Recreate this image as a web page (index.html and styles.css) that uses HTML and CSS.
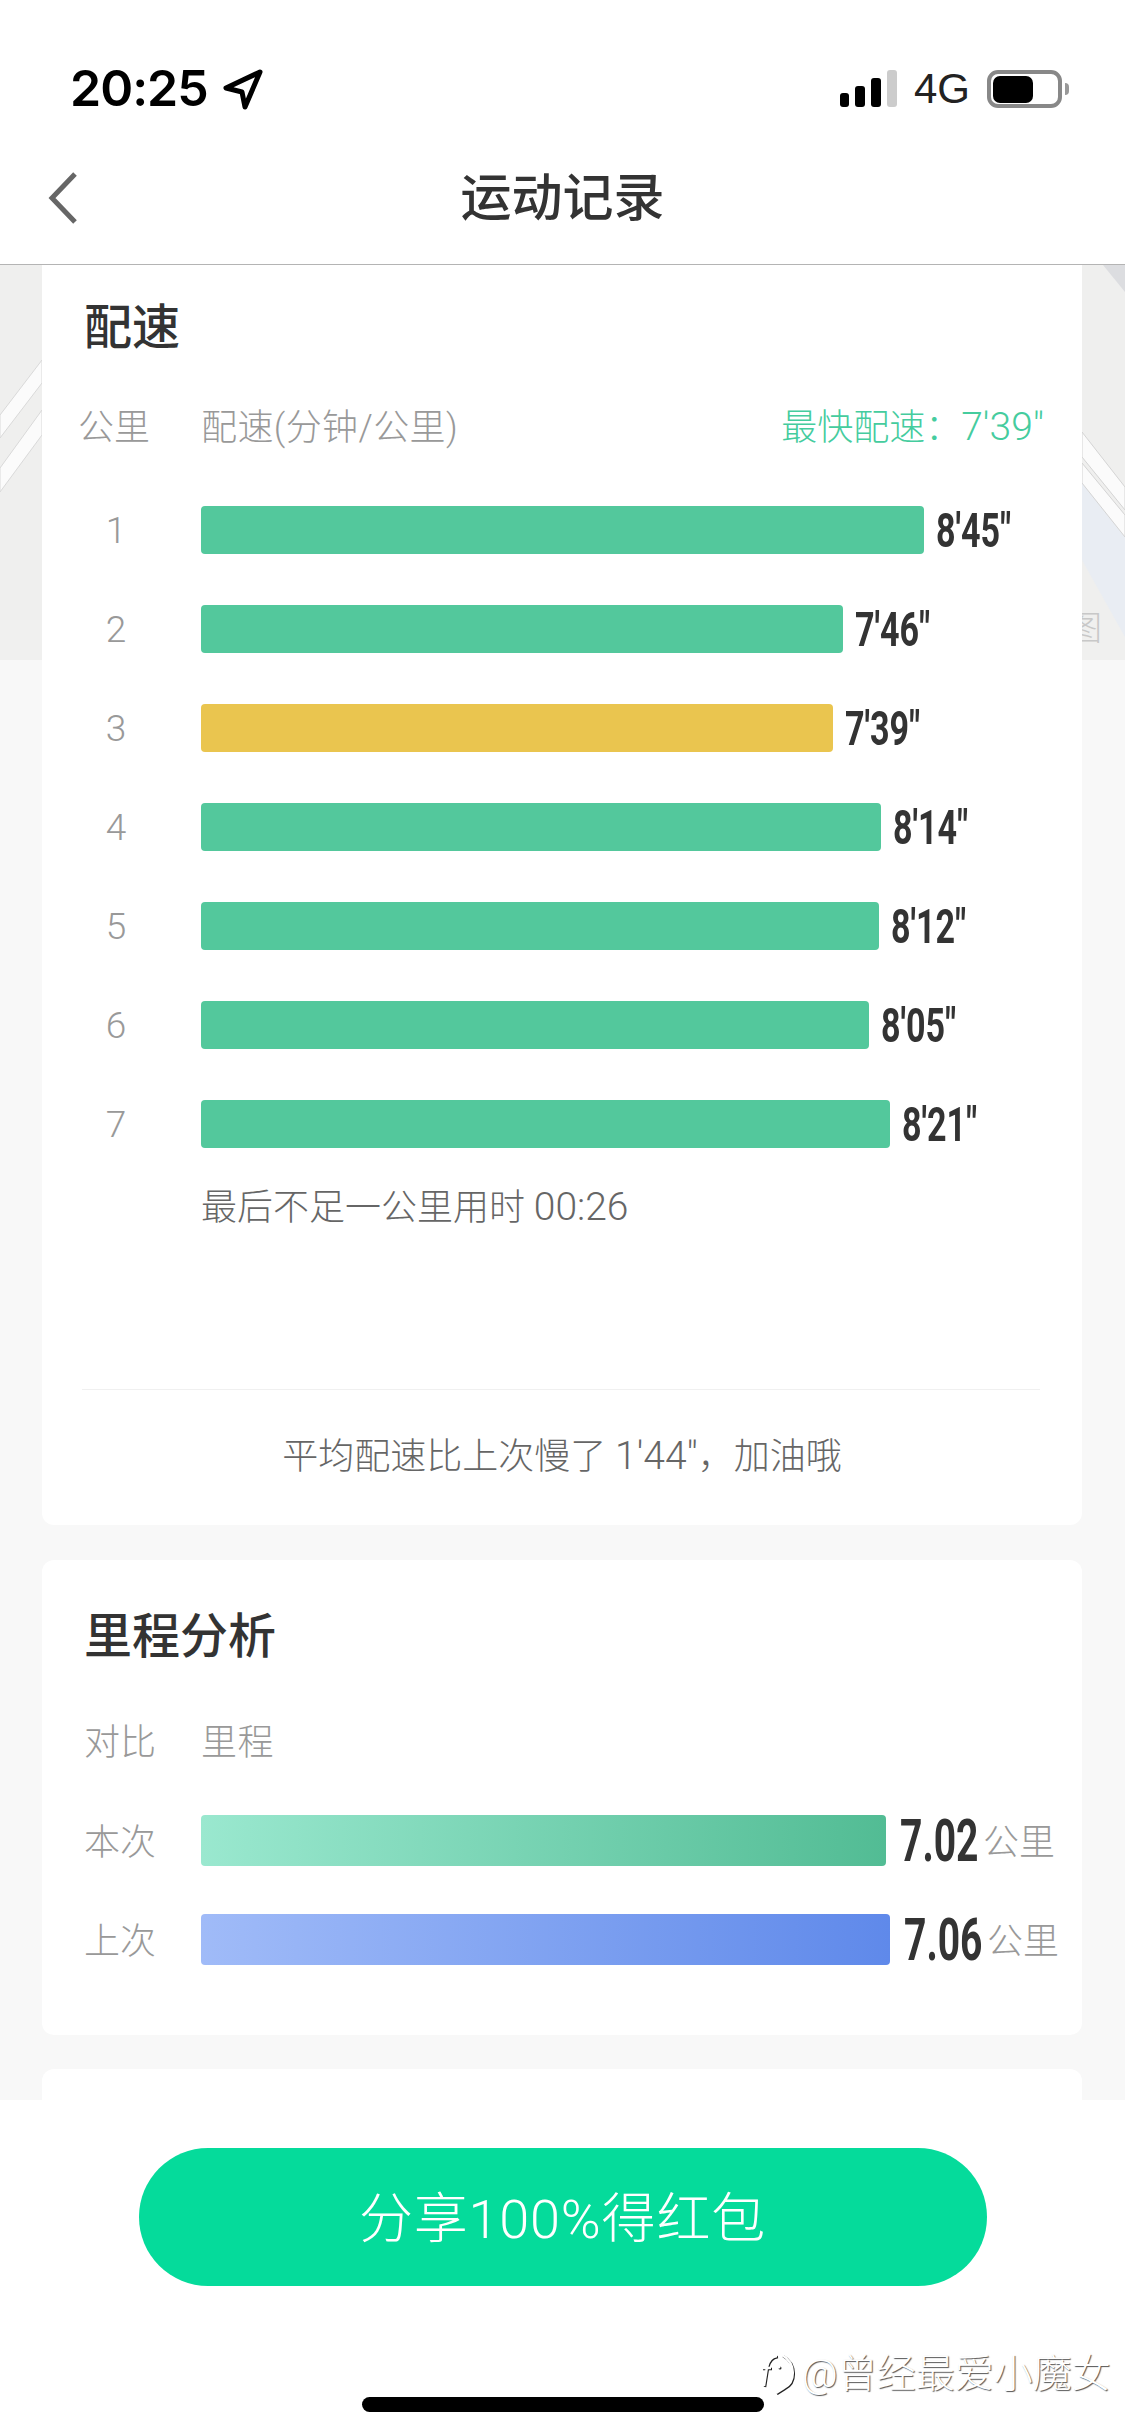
FILE: index.html
```html
<!DOCTYPE html>
<html lang="zh-CN">

<head>
  <meta charset="UTF-8">
  <meta name="viewport" content="width=device-width, initial-scale=1.0">
  <title>运动记录</title>
  <link rel="stylesheet" href="styles.css">
</head>

<body>
  <div class="screen">
    <header class="top">
      <div class="status">
        <div class="status-left">
          <span class="time">20:25</span>
          <svg class="locate" width="44" height="44" viewBox="0 0 44 44">
            <path d="M38 5 L4 21 L20 25 L23 40 Z" fill="#fff" stroke="#000" stroke-width="5" stroke-linejoin="round" />
          </svg>
        </div>
        <div class="status-right">
          <div class="signal">
            <i class="sig sig-1"></i>
            <i class="sig sig-2"></i>
            <i class="sig sig-3"></i>
            <i class="sig sig-4"></i>
          </div>
          <span class="net">4G</span>
          <div class="battery">
            <i class="battery-fill"></i>
          </div>
          <i class="battery-nub"></i>
        </div>
      </div>
      <nav class="nav">
        <svg class="back" width="32" height="52" viewBox="0 0 32 52">
          <path d="M28 2 L5 26 L28 50" fill="none" stroke="#666" stroke-width="5" />
        </svg>
        <h1 class="title">运动记录</h1>
      </nav>
    </header>

    <main class="content">
      <!-- map behind the cards -->
      <svg class="map" width="1125" height="395" viewBox="0 265 1125 395">
        <rect x="0" y="265" width="1125" height="395" fill="#efefee" />
        <rect x="0" y="620" width="1125" height="40" fill="#f0f0ef" />
        <path d="M1082 483 L1125 537 V637 L1082 560 Z" fill="#e9edf3" />
        <path d="M1103 265 H1125 V292 Z" fill="#dcdde0" />
        <path d="M0 415 L42 360 V383 L0 438 Z" fill="#fbfbfb" stroke="#d9d9d9" stroke-width="1" />
        <path d="M0 468 L42 410 V435 L0 492 Z" fill="#fbfbfb" stroke="#d9d9d9" stroke-width="1" />
        <path d="M1082 432 L1125 487 V510 L1082 457 Z" fill="#fbfbfb" stroke="#d4d4d4" stroke-width="1" />
        <path d="M1082 463 L1125 515 V537 L1082 483 Z" fill="#fbfbfb" stroke="#d4d4d4" stroke-width="1" />
        <text x="1068" y="640" class="map-label">图</text>
      </svg>

      <section class="card card-pace">
        <h2 class="card-title">配速</h2>
        <div class="head-row">
          <span class="head-km">公里</span>
          <span class="head-name">配速(分钟/公里)</span>
          <span class="head-best">最快配速：<span class="lat">7'39"</span></span>
        </div>
        <div class="pace-list">
          <div class="pace-row">
            <span class="pace-num">1</span>
            <div class="bar bar-green" style="width: 723px"></div>
            <span class="pace-val">8'45"</span>
          </div>
          <div class="pace-row">
            <span class="pace-num">2</span>
            <div class="bar bar-green" style="width: 642px"></div>
            <span class="pace-val">7'46"</span>
          </div>
          <div class="pace-row">
            <span class="pace-num">3</span>
            <div class="bar bar-yellow" style="width: 632px"></div>
            <span class="pace-val">7'39"</span>
          </div>
          <div class="pace-row">
            <span class="pace-num">4</span>
            <div class="bar bar-green" style="width: 680px"></div>
            <span class="pace-val">8'14"</span>
          </div>
          <div class="pace-row">
            <span class="pace-num">5</span>
            <div class="bar bar-green" style="width: 678px"></div>
            <span class="pace-val">8'12"</span>
          </div>
          <div class="pace-row">
            <span class="pace-num">6</span>
            <div class="bar bar-green" style="width: 668px"></div>
            <span class="pace-val">8'05"</span>
          </div>
          <div class="pace-row">
            <span class="pace-num">7</span>
            <div class="bar bar-green" style="width: 689px"></div>
            <span class="pace-val">8'21"</span>
          </div>
        </div>
        <p class="pace-note">最后不足一公里用时 <span class="lat">00:26</span></p>
        <hr class="divider">
        <p class="pace-compare">平均配速比上次慢了 <span class="lat">1'44"</span>，加油哦</p>
      </section>

      <section class="card card-dist">
        <h2 class="card-title">里程分析</h2>
        <div class="head-row dist-head">
          <span class="head-cmp">对比</span>
          <span class="head-name">里程</span>
        </div>
        <div class="dist-row dist-first">
          <span class="dist-label">本次</span>
          <div class="bar-tall bar-mint" style="width: 685px"></div>
          <span class="dist-val">7.02</span>
          <span class="dist-unit">公里</span>
        </div>
        <div class="dist-row">
          <span class="dist-label">上次</span>
          <div class="bar-tall bar-blue" style="width: 689px"></div>
          <span class="dist-val">7.06</span>
          <span class="dist-unit">公里</span>
        </div>
      </section>

      <section class="card card-next"></section>
    </main>

    <footer class="bottom">
      <button class="share-btn">分享100%得红包</button>
      <div class="home-bar"></div>
    </footer>

    <div class="watermark">
      <svg class="wm-logo" width="34" height="40" viewBox="0 0 34 40">
        <path d="M20 1 C34 9 34 28 22 34 L14 39" fill="none" stroke="#fff" stroke-width="2.5" />
        <path d="M15 2 C8 3 6 8 5 13 L2 32 M0 14 H9" fill="none" stroke="#fff" stroke-width="2.5" />
        <circle cx="17" cy="13" r="1.5" fill="#fff" />
      </svg>
      <span class="wm-text">@曾经最爱小魔女</span>
    </div>
  </div>
</body>

</html>
```

FILE: styles.css
```css
* {
  box-sizing: border-box;
}

html,
body {
  margin: 0;
  padding: 0;
}

body {
  font-family: Roboto, "Noto Sans CJK SC", sans-serif;
  font-weight: 300;
  background-color: #f8f8f8;
}

.screen {
  width: 1125px;
  height: 2436px;
  position: relative;
  overflow: hidden;

  display: flex;
  flex-direction: column;
}

/* header */
.top {
  height: 265px;
  flex: none;
  background-color: #fff;
  border-bottom: 1px solid #b4b4b4;
  position: relative;
  z-index: 2;
}

.status {
  height: 118px;
  padding: 59px 56px 0 70px;

  display: flex;
  align-items: center;
  justify-content: space-between;
}

.status-left {
  display: flex;
  align-items: center;
}

.time {
  font-family: Inter, sans-serif;
  font-size: 50px;
  font-weight: 600;
  color: #000;
  letter-spacing: -1px;
  line-height: 59px;
}

.locate {
  margin-left: 14px;
}

.status-right {
  display: flex;
  align-items: center;
}

.signal {
  display: flex;
  align-items: flex-end;
  gap: 6px;
  height: 37px;
}

.sig {
  display: block;
  width: 10px;
  background-color: #000;
  border-radius: 3px;
}

.sig-1 {
  width: 9px;
  height: 14px;
}

.sig-2 {
  height: 21px;
}

.sig-3 {
  height: 29px;
}

.sig-4 {
  height: 37px;
  background-color: #ccc;
}

.net {
  margin-left: 17px;
  font-family: "Liberation Sans", sans-serif;
  font-size: 42px;
  font-weight: 400;
  color: #222;
  line-height: 44px;
}

.battery {
  width: 75px;
  height: 38px;
  margin-left: 17px;
  padding: 2px;
  border: 4px solid #888;
  border-radius: 11px;
}

.battery-fill {
  display: block;
  width: 40px;
  height: 27px;
  background-color: #000;
  border-radius: 7px;
}

.battery-nub {
  display: block;
  margin-left: 3px;
  width: 4px;
  height: 12px;
  background-color: #999;
  border-radius: 0 4px 4px 0;
}

.nav {
  height: 146px;
  padding-top: 16px;
  position: relative;

  display: flex;
  align-items: center;
  justify-content: center;
}

.back {
  position: absolute;
  left: 47px;
  top: 54px;
}

.title {
  margin: 0;
  font-size: 51px;
  font-weight: 500;
  color: #333;
  line-height: 60px;
}

/* scroll area */
.content {
  flex: 1;
  min-height: 0;
  padding: 0 43px 0 42px;
  position: relative;
  overflow: hidden;
}

.map {
  position: absolute;
  left: 0;
  top: 0;
  display: block;
}

.map-label {
  font-size: 34px;
  fill: #c8c8c8;
}

.card {
  position: relative;
  background-color: #fff;
  border-radius: 12px;
  padding: 0 42px;
}

.card-pace {
  height: 1260px;
  padding-top: 38px;
  border-radius: 0 0 12px 12px;
}

.card-dist {
  margin-top: 35px;
  height: 475px;
  padding-top: 52px;
}

.card-next {
  margin-top: 34px;
  height: 120px;
}

.card-title {
  margin: 0;
  font-size: 48px;
  font-weight: 500;
  color: #333;
  line-height: 50px;
}

.head-row {
  height: 50px;
  margin-top: 50px;
  font-size: 36px;
  color: #999;
  line-height: 50px;

  display: flex;
  align-items: center;
}

.dist-head {
  margin-top: 56px;
}

.head-km {
  width: 123px;
  margin-left: -6px;
  flex: none;
}

.head-cmp {
  width: 117px;
  flex: none;
}

.head-name {
  letter-spacing: 0.4px;
}

.head-best {
  margin-left: auto;
  margin-right: -4px;
  color: #45cc9e;
}

/* latin text in the reference runs larger than the chinese beside it */
.lat {
  font-size: 39px;
  line-height: 1;
}

.pace-list {
  margin-top: 53px;

  display: flex;
  flex-direction: column;
  gap: 51px;
}

.pace-row {
  height: 48px;

  display: flex;
  align-items: center;
}

.pace-num {
  width: 64px;
  margin-right: 53px;
  flex: none;
  text-align: center;
  font-size: 37px;
  color: #999;
}

.bar {
  height: 48px;
  flex: none;
  border-radius: 4px;
}

.bar-green {
  background-color: #53c89c;
}

.bar-yellow {
  background-color: #eac54f;
}

/* the values are set in a condensed numeral face, squeezed here */
.pace-val {
  margin-left: 12px;
  font-size: 48px;
  font-weight: 700;
  color: #333;
  white-space: nowrap;
  transform: scaleX(0.71);
  transform-origin: left center;
}

.pace-note {
  height: 50px;
  margin: 35px 0 0 117px;
  font-size: 36px;
  color: #666;
  line-height: 50px;
}

.divider {
  margin: 156px 0 0 -2px;
  border: none;
  height: 1px;
  background-color: #f0f0f0;
}

.pace-compare {
  height: 50px;
  margin: 42px 0 0;
  text-align: center;
  font-size: 36px;
  color: #666;
  line-height: 50px;
}

.dist-row {
  height: 51px;
  margin-top: 48px;

  display: flex;
  align-items: center;
}

.dist-first {
  margin-top: 47px;
}

.dist-label {
  width: 117px;
  padding-bottom: 3px;
  flex: none;
  font-size: 36px;
  color: #999;
}

.bar-tall {
  height: 51px;
  flex: none;
  border-radius: 4px;
}

.bar-mint {
  background-image: linear-gradient(to right, #9ae8cf, #52bc94);
}

.bar-blue {
  background-image: linear-gradient(to right, #a0bbf8, #5f89ea);
}

.dist-val {
  width: 83px;
  margin-left: 14px;
  flex: none;
  font-size: 60px;
  font-weight: 700;
  color: #333;
  white-space: nowrap;
  transform: scaleX(0.65);
  transform-origin: left center;
}

.dist-unit {
  padding-bottom: 4px;
  font-size: 36px;
  color: #999;
  white-space: nowrap;
}

/* footer */
.bottom {
  height: 336px;
  flex: none;
  padding-top: 48px;
  background-color: #fff;
  position: relative;
  z-index: 2;

  display: flex;
  flex-direction: column;
  align-items: center;
}

.share-btn {
  width: 848px;
  height: 138px;
  padding-bottom: 6px;
  border: none;
  border-radius: 69px;
  background-color: #05db9b;
  color: #fff;
  font-family: Roboto, "Noto Sans CJK SC", sans-serif;
  font-size: 54px;
  font-weight: 300;
  letter-spacing: 0.8px;
}

.home-bar {
  width: 402px;
  height: 15px;
  margin-top: 111px;
  background-color: #000;
  border-radius: 8px;
}

/* watermark sits over the bottom bar */
.watermark {
  position: absolute;
  left: 762px;
  top: 2350px;
  z-index: 3;

  display: flex;
  align-items: center;
  gap: 6px;
}

.wm-logo {
  filter: drop-shadow(1px 1px 0 #222);
}

.wm-text {
  font-size: 39px;
  color: #fff;
  line-height: 48px;
  white-space: nowrap;
  text-shadow: 1px 1px 1px #555;
}
```
